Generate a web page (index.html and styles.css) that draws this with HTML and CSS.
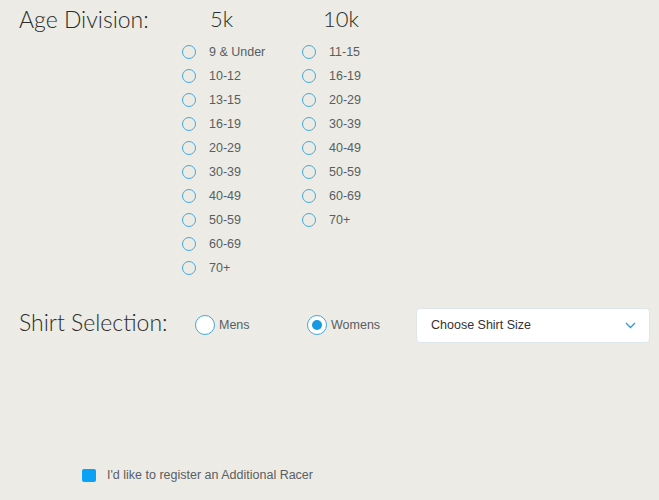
FILE: index.html
```html
<!DOCTYPE html>
<html>
<head>
<meta charset="utf-8">
<link rel="stylesheet" href="styles.css">
</head>
<body>
<div class="page">
  <section class="age">
    <h2 class="title age-title">Age Division:</h2>
    <div class="col col-5k">
      <div class="col-head">5k</div>
      <ul class="options">
        <li class="opt"><span class="radio"></span><span>9 &amp; Under</span></li>
        <li class="opt"><span class="radio"></span><span>10-12</span></li>
        <li class="opt"><span class="radio"></span><span>13-15</span></li>
        <li class="opt"><span class="radio"></span><span>16-19</span></li>
        <li class="opt"><span class="radio"></span><span>20-29</span></li>
        <li class="opt"><span class="radio"></span><span>30-39</span></li>
        <li class="opt"><span class="radio"></span><span>40-49</span></li>
        <li class="opt"><span class="radio"></span><span>50-59</span></li>
        <li class="opt"><span class="radio"></span><span>60-69</span></li>
        <li class="opt"><span class="radio"></span><span>70+</span></li>
      </ul>
    </div>
    <div class="col col-10k">
      <div class="col-head">10k</div>
      <ul class="options">
        <li class="opt"><span class="radio"></span><span>11-15</span></li>
        <li class="opt"><span class="radio"></span><span>16-19</span></li>
        <li class="opt"><span class="radio"></span><span>20-29</span></li>
        <li class="opt"><span class="radio"></span><span>30-39</span></li>
        <li class="opt"><span class="radio"></span><span>40-49</span></li>
        <li class="opt"><span class="radio"></span><span>50-59</span></li>
        <li class="opt"><span class="radio"></span><span>60-69</span></li>
        <li class="opt"><span class="radio"></span><span>70+</span></li>
      </ul>
    </div>
  </section>

  <section class="shirt">
    <h2 class="title shirt-title">Shirt Selection:</h2>
    <label class="big-opt mens"><span class="big-radio"></span><span>Mens</span></label>
    <label class="big-opt womens"><span class="big-radio checked"></span><span>Womens</span></label>
    <div class="select">
      <span>Choose Shirt Size</span>
      <svg class="chev" width="11" height="7" viewBox="0 0 11 7"><polyline points="1,1 5.5,5.5 10,1" fill="none" stroke="#2b9be0" stroke-width="1.3"/></svg>
    </div>
  </section>

  <section class="extra">
    <span class="checkbox"></span>
    <span class="extra-label">I'd like to register an Additional Racer</span>
  </section>
</div>
</body>
</html>
```

FILE: styles.css
```css
html, body {
  margin: 0;
  padding: 0;
  background: #ecebe5;
}
body {
  font-family: "Liberation Sans", Arial, sans-serif;
  color: #595e62;
  width: 659px;
  height: 500px;
  overflow: hidden;
}
.page {
  padding: 5px 0 0 19px;
}
.title {
  margin: 0;
  font-family: "Lato", sans-serif;
  font-weight: 300;
  font-size: 23px;
  line-height: 28px;
  color: #2b2b2b;
}
.age {
  display: flex;
}
.age-title {
  width: 163px;
}
.col-10k {
  margin-left: 13px;
}
.col-head {
  font-family: "Lato", sans-serif;
  font-weight: 300;
  font-size: 22px;
  line-height: 28px;
  color: #2b2b2b;
  margin-bottom: 7px;
}
.col-5k .col-head {
  margin-left: 28px;
}
.col-10k .col-head {
  margin-left: 21px;
}
.options {
  list-style: none;
  margin: 0;
  padding: 0;
  width: 107px;
}
.opt {
  display: flex;
  align-items: center;
  height: 24px;
  font-size: 12.5px;
}
.radio {
  box-sizing: border-box;
  width: 14px;
  height: 14px;
  border: 1.5px solid #45a7dc;
  border-radius: 50%;
  margin-right: 13px;
  flex: none;
}
.shirt {
  display: flex;
  align-items: center;
  height: 34px;
  margin-top: 28px;
}
.shirt-title {
  width: 176px;
  padding-bottom: 6px;
}
.big-opt {
  display: flex;
  align-items: center;
  font-size: 12.5px;
}
.mens {
  width: 112px;
}
.womens {
  width: 109px;
}
.big-radio {
  box-sizing: border-box;
  width: 20px;
  height: 20px;
  border: 1.5px solid #45a7dc;
  border-radius: 50%;
  background: #fff;
  margin-right: 4px;
  display: flex;
  align-items: center;
  justify-content: center;
  flex: none;
}
.big-radio.checked::after {
  content: "";
  width: 10px;
  height: 10px;
  border-radius: 50%;
  background: #1798e3;
}
.select {
  box-sizing: border-box;
  width: 234px;
  height: 35px;
  background: #fff;
  border: 1px solid #dde6eb;
  border-radius: 4px;
  display: flex;
  align-items: center;
  justify-content: space-between;
  padding: 0 13px 0 14px;
  font-size: 12.5px;
  color: #333;
}
.chev {
  display: block;
}
.extra {
  display: flex;
  align-items: center;
  margin: 126px 0 0 63px;
  height: 14px;
}
.checkbox {
  width: 14px;
  height: 13px;
  border-radius: 2px;
  background: #0ba2f6;
  margin-right: 11px;
}
.extra-label {
  font-size: 12.5px;
}
```
